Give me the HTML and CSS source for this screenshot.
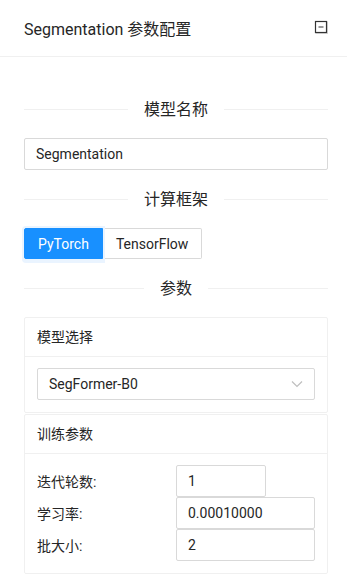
FILE: index.html
```html
<!DOCTYPE html>
<html lang="zh-CN">
<head>
    <meta charset="UTF-8">
    <meta name="viewport" content="width=device-width, initial-scale=1.0">
    <title>Segmentation 参数配置</title>
    <link rel="stylesheet" href="styles.css">
</head>
<body>
    <div class="panel">
        <div class="panel__head">
            <span class="panel__title">Segmentation 参数配置</span>
            <svg class="panel__toggle" width="14" height="14" viewBox="0 0 14 14">
                <rect x="2" y="2" width="11.5" height="11.5" fill="none" stroke="#d6d6d6" stroke-width="1"/>
                <rect x="1.5" y="1.5" width="11" height="11" fill="#fff" stroke="#333" stroke-width="1.2"/>
                <line x1="4.5" y1="7" x2="9.5" y2="7" stroke="#999" stroke-width="2"/>
            </svg>
        </div>
        <div class="panel__body">
            <div class="divider"><span class="divider__text">模型名称</span></div>
            <input class="input" type="text" value="Segmentation">

            <div class="divider"><span class="divider__text">计算框架</span></div>
            <div class="btn-group">
                <button class="btn btn--primary">PyTorch</button>
                <button class="btn">TensorFlow</button>
            </div>

            <div class="divider"><span class="divider__text">参数</span></div>

            <div class="card">
                <div class="card__head">模型选择</div>
                <div class="card__body">
                    <div class="select">
                        <span class="select__value">SegFormer-B0</span>
                        <svg class="select__arrow" width="12" height="8" viewBox="0 0 12 8">
                            <polyline points="1,1.5 6,6.5 11,1.5" fill="none" stroke="#bfbfbf" stroke-width="1.2"/>
                        </svg>
                    </div>
                </div>
            </div>

            <div class="card">
                <div class="card__head">训练参数</div>
                <div class="card__body">
                    <div class="form-row">
                        <label class="form-row__label">迭代轮数:</label>
                        <div class="form-row__field"><input class="input input--short" type="text" value="1"></div>
                    </div>
                    <div class="form-row">
                        <label class="form-row__label">学习率:</label>
                        <div class="form-row__field"><input class="input" type="text" value="0.00010000"></div>
                    </div>
                    <div class="form-row">
                        <label class="form-row__label">批大小:</label>
                        <div class="form-row__field"><input class="input" type="text" value="2"></div>
                    </div>
                </div>
            </div>
        </div>
    </div>
</body>
</html>
```

FILE: styles.css
```css
body {
    margin: 0;
    background: #ffffff;
    font-family: Roboto, "Noto Sans CJK SC", sans-serif;
    font-size: 14px;
    color: #262626;
}

.panel {
    width: 347px;
}

.panel__head {
    display: flex;
    align-items: center;
    justify-content: space-between;
    height: 56px;
    padding: 0 19px 0 24px;
    border-bottom: 1px solid #f0f0f0;
}

.panel__title {
    font-size: 16px;
    font-weight: 400;
    color: #262626;
}

.panel__toggle {
    display: block;
    margin-top: -2px;
}

.panel__body {
    padding: 23px 19px 0 24px;
}

/* divider with centered text */
.divider {
    display: flex;
    align-items: center;
    margin: 17px 0 16px;
    height: 25px;
    font-size: 16px;
    color: #262626;
}

.divider::before,
.divider::after {
    content: "";
    flex: 1;
    border-top: 1px solid #f0f0f0;
}

.divider__text {
    padding: 0 16px;
    line-height: 25px;
}

.input {
    display: block;
    box-sizing: border-box;
    width: 100%;
    height: 32px;
    margin: 0;
    padding: 4px 11px;
    border: 1px solid #d9d9d9;
    border-radius: 2px;
    font-family: inherit;
    font-size: 14px;
    color: #262626;
    background: #ffffff;
    outline: none;
}

.btn-group {
    display: flex;
}

.btn {
    height: 31px;
    padding: 0 13px;
    border: 1px solid #d9d9d9;
    background: #ffffff;
    font-family: inherit;
    font-size: 14px;
    color: #262626;
    cursor: pointer;
}

.btn:first-child {
    border-radius: 2px 0 0 2px;
}

.btn:last-child {
    border-left: none;
    border-radius: 0 2px 2px 0;
}

.btn--primary {
    background: #1890ff;
    border-color: #1890ff;
    color: #ffffff;
    box-shadow: 0 0 0 2px #eaf4ff, 0 2px 0 2px #eaf4ff;
    position: relative;
    z-index: 1;
}

.card {
    border: 1px solid #f0f0f0;
    border-radius: 2px;
    margin-bottom: 1px;
}

.card__head {
    height: 38px;
    line-height: 38px;
    padding: 0 12px;
    border-bottom: 1px solid #f0f0f0;
    font-size: 14px;
    color: #262626;
}

.card__body {
    padding: 11px 12px 12px;
}

.select {
    display: flex;
    align-items: center;
    justify-content: space-between;
    box-sizing: border-box;
    height: 32px;
    padding: 0 11px;
    border: 1px solid #d9d9d9;
    border-radius: 2px;
}

.select__arrow {
    display: block;
}

.form-row {
    display: grid;
    grid-template-columns: 1fr 1fr;
    align-items: center;
}

.form-row__label {
    font-size: 14px;
    color: #262626;
}

.input--short {
    width: 90px;
}
```
